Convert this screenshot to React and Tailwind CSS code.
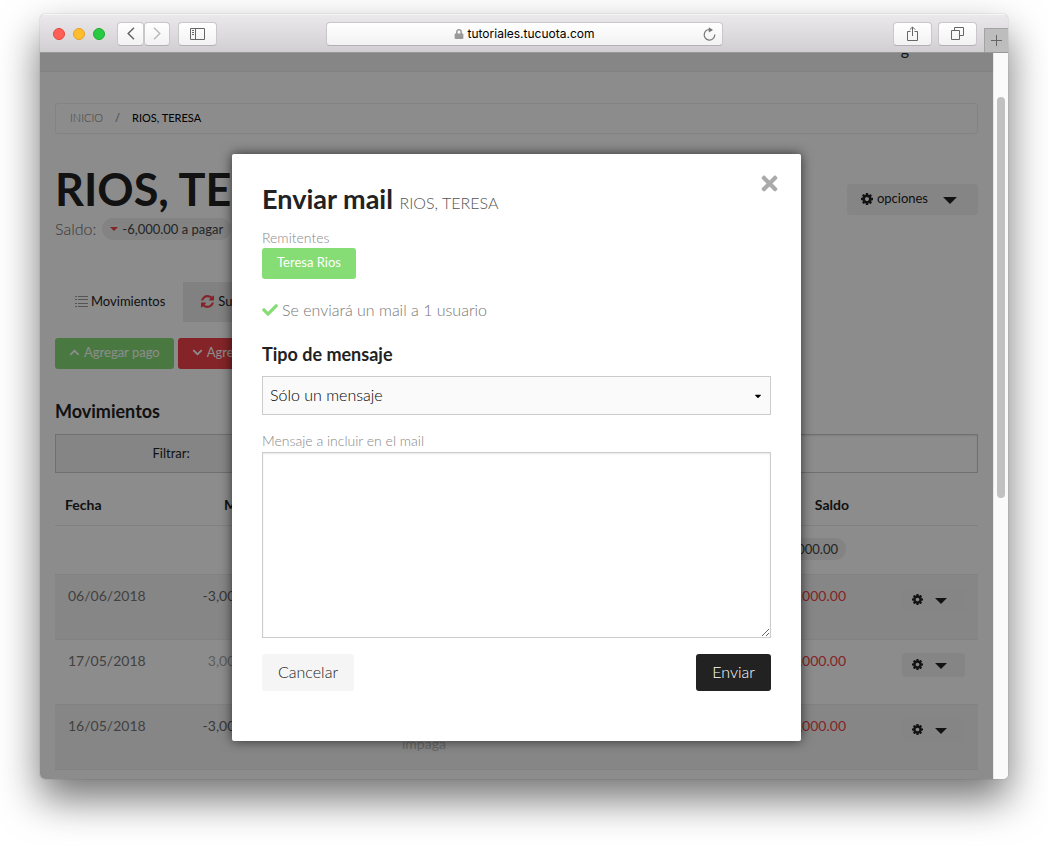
import { FaCaretDown, FaCheck, FaChevronDown, FaChevronUp, FaLock, FaTimes } from 'react-icons/fa';

const movements = [
  { date: '06/06/2018', amount: '-3,000.00', balance: '-6,000.00' },
  { date: '17/05/2018', amount: '3,000.00', balance: '-3,000.00', paid: true },
  { date: '16/05/2018', amount: '-3,000.00', balance: '-6,000.00', status: 'impaga' },
];

function CogIcon({ className }) {
  return (
    <svg viewBox="128 128 1536 1536" fill="currentColor" className={className} aria-hidden="true">
      <path d="M1152 896q0-106-75-181t-181-75-181 75-75 181 75 181 181 75 181-75 75-181zm512-109v222q0 12-8 23t-20 13l-185 28q-19 54-39 91 35 50 107 138 10 12 10 25t-9 23q-27 37-99 108t-94 71q-12 0-26-9l-138-108q-44 23-91 38-16 136-29 186-7 28-36 28h-222q-14 0-24.5-8.5t-11.5-21.5l-28-184q-49-16-90-37l-141 107q-10 9-25 9-14 0-25-11-126-114-165-168-7-10-7-23 0-12 8-23 15-21 51-66.5t54-70.5q-27-50-41-99l-183-27q-13-2-21-12.5t-8-23.5v-222q0-12 8-23t19-13l186-28q14-46 39-92-40-57-107-138-10-12-10-24 0-10 9-23 26-36 98.5-107.5t94.5-71.5q13 0 26 10l138 107q44-23 91-38 16-136 29-186 7-28 36-28h222q14 0 24.5 8.5t11.5 21.5l28 184q49 16 90 37l142-107q9-9 24-9 13 0 25 10 129 119 165 170 7 8 7 22 0 12-8 23-15 21-51 66.5t-54 70.5q26 50 41 98l183 28q13 2 21 12.5t8 23.5z" />
    </svg>
  );
}

function RefreshIcon({ className }) {
  return (
    <svg viewBox="128 128 1536 1536" fill="currentColor" className={className} aria-hidden="true">
      <path d="M1639 1056q0 5-1 7-64 268-268 434.5t-478 166.5q-146 0-282.5-55t-243.5-157l-129 129q-19 19-45 19t-45-19-19-45v-448q0-26 19-45t45-19h448q26 0 45 19t19 45-19 45l-137 137q71 66 161 102t187 36q134 0 250-65t186-179q11-17 53-117 8-23 30-23h192q13 0 22.5 9.5t9.5 22.5zm25-800v448q0 26-19 45t-45 19h-448q-26 0-45-19t-19-45 19-45l138-138q-148-137-349-137-134 0-250 65t-186 179q-11 17-53 117-8 23-30 23h-199q-13 0-22.5-9.5t-9.5-22.5v-7q65-268 270-434.5t480-166.5q146 0 284 55.5t245 156.5l130-129q19-19 45-19t45 19 19 45z" />
    </svg>
  );
}

function ListIcon({ className }) {
  return (
    <svg viewBox="0 0 13 11" stroke="currentColor" className={className} aria-hidden="true">
      <path d="M0 .5h2M3 .5h10M0 3.5h2M3 3.5h10M0 7.5h2M3 7.5h10M0 10.5h2M3 10.5h10" />
    </svg>
  );
}

function Caret({ className }) {
  return (
    <svg viewBox="0 0 14 7" fill="currentColor" className={className} aria-hidden="true">
      <path d="M0 0h14L7 7z" />
    </svg>
  );
}

function ChromeButton({ label, className, children }) {
  return (
    <button
      type="button"
      aria-label={label}
      className={`flex h-6 items-center justify-center rounded border border-[#c9c7c9] border-b-[#b3b1b3] bg-gradient-to-b from-white to-[#f3f2f3] text-[#666] ${className}`}
    >
      {children}
    </button>
  );
}

function BrowserBar() {
  return (
    <header className="grid h-[39px] shrink-0 grid-cols-[1fr_397px_1fr] items-center border-b border-[#979797] bg-gradient-to-b from-[#ebe9eb] to-[#d1cfd1] pt-px shadow-[inset_0_1px_0_#f6f5f6]">
      <div className="flex items-center pl-[13px]">
        <div className="flex gap-2">
          <span className="size-3 rounded-full border border-[#e2463f] bg-[#ff5f57]" />
          <span className="size-3 rounded-full border border-[#e1a325] bg-[#ffbd2e]" />
          <span className="size-3 rounded-full border border-[#1fab2f] bg-[#28ca41]" />
        </div>
        <div className="ml-3 flex">
          <ChromeButton label="Atrás" className="w-[27px]">
            <svg viewBox="0 0 8 13" fill="none" stroke="currentColor" strokeWidth="1.5" className="h-[13px] w-2">
              <path d="M7 .8 1.2 6.5 7 12.2" />
            </svg>
          </ChromeButton>
          <ChromeButton label="Adelante" className="w-[26px]">
            <svg viewBox="0 0 8 13" fill="none" stroke="#bbb" strokeWidth="1.5" className="h-[13px] w-2">
              <path d="M1 .8 6.8 6.5 1 12.2" />
            </svg>
          </ChromeButton>
        </div>
        <ChromeButton label="Barra lateral" className="ml-2 w-[39px]">
          <svg viewBox="0 0 15 12" fill="none" stroke="currentColor" className="h-3 w-[15px]">
            <path d="M.5.5h14v11H.5zM5.5.5v11M2 2.5h2M2 4.5h2M2 6.5h2" />
          </svg>
        </ChromeButton>
      </div>
      <div className="flex h-6 items-center rounded border border-[#c9c7c9] border-b-[#b3b1b3] bg-gradient-to-b from-white to-[#f3f2f3] px-1">
        <span className="w-4" />
        <div className="flex flex-1 items-center justify-center gap-1 font-[Inter,sans-serif] text-[12px] text-black">
          <FaLock size={10} className="text-[#999]" />
          tutoriales.tucuota.com
        </div>
        <button type="button" aria-label="Recargar" className="flex w-4 justify-center text-[#777]">
          <svg viewBox="0 0 13 14" fill="none" stroke="currentColor" strokeWidth="1.2" className="h-[14px] w-[13px]">
            <path d="M8.5 2.9A5.3 5.3 0 1 0 11.8 7.6" />
            <path d="M5.8.2 10 2.9 5.8 5.4z" fill="currentColor" stroke="none" />
          </svg>
        </button>
      </div>
      <div className="flex items-center justify-end self-stretch">
        <ChromeButton label="Compartir" className="w-[39px]">
          <svg viewBox="0 0 13 15" fill="none" stroke="currentColor" className="h-[15px] w-[13px]">
            <path d="M4.5 5.5h-3v9h10v-9h-3M6.5 10V1M3.8 3.7 6.5 1l2.7 2.7" />
          </svg>
        </ChromeButton>
        <ChromeButton label="Mostrar pestañas" className="ml-1.5 w-[39px]">
          <svg viewBox="0 0 13 13" fill="none" stroke="currentColor" className="size-[13px]">
            <path d="M.5 3.5h8v9h-8zM3.5 3.5v-3h9v8h-4" />
          </svg>
        </ChromeButton>
        <button
          type="button"
          aria-label="Nueva pestaña"
          className="ml-[7px] flex h-6 w-6 items-center justify-center self-end border-t border-l border-[#a3a3a3] bg-[#bebdbe] text-[#666]"
        >
          <svg viewBox="0 0 11 11" stroke="currentColor" className="size-[11px]">
            <path d="M5.5 0v11M0 5.5h11" />
          </svg>
        </button>
      </div>
    </header>
  );
}

function AccountPage() {
  return (
    <div className="text-[#222]">
      <nav className="flex h-[19px] items-start justify-end border-b border-[#ebebeb] bg-[#f4f4f4] pr-[84px] text-base leading-none">
        <a href="#cuenta" className="-mt-3">g</a>
      </nav>

      <div className="px-[15px]">
        <ol className="mt-[31px] flex h-[31px] items-center rounded-[3px] border border-[#eee] px-[14px] text-[11px] uppercase">
          <li><a href="#inicio" className="font-light text-[#777]">Inicio</a></li>
          <li className="mx-3 text-[#777]">/</li>
          <li className="text-black">Rios, Teresa</li>
        </ol>

        <div className="mt-[29px] flex items-start justify-between">
          <div>
            <h1 className="text-[45px] leading-[52px] font-bold">RIOS, TERESA</h1>
            <p className="mt-[3px] flex items-center text-base leading-[22px] font-light text-[#666]">
              Saldo:
              <span className="ml-[6px] flex items-center rounded-full bg-[#eee] px-2 text-[13px] leading-[22px] font-normal text-[#444]">
                <Caret className="mr-1 h-1 w-2 text-[#f04249]" />
                -6,000.00 a pagar
              </span>
            </p>
          </div>
          <button type="button" className="mt-[21px] flex h-[31px] items-center rounded-[3px] bg-[#f3f3f3] pr-[21px] pb-0.5 pl-[14px] text-[13px]">
            <CogIcon className="mr-1 size-3" />
            opciones
            <Caret className="mt-1 ml-[15px] h-[7px] w-[14px]" />
          </button>
        </div>

        <div className="mt-[42px] flex text-[13px] leading-[39px]">
          <a href="#movimientos" className="flex items-center pr-[18px] pb-px pl-5">
            <ListIcon className="mr-[3px] h-[11px] w-[13px] text-[#999]" />
            Movimientos
          </a>
          <a href="#suscripciones" className="flex items-center bg-[#ebebeb] pr-5 pb-px pl-[18px]">
            <RefreshIcon className="mr-1 size-[13px] text-[#f04249]" />
            Suscripciones
          </a>
        </div>

        <div className="mt-4 flex gap-1 text-[13px] text-white">
          <button type="button" className="flex h-[31px] items-center gap-1 rounded-[3px] bg-[#86dc75] px-[14px] pb-0.5">
            <FaChevronUp size={11} /> Agregar pago
          </button>
          <button type="button" className="flex h-[31px] items-center gap-1 rounded-[3px] bg-[#f04249] px-[14px] pb-0.5">
            <FaChevronDown size={11} /> Agregar deuda
          </button>
        </div>

        <h2 className="mt-[30px] text-lg leading-6 font-bold">Movimientos</h2>
        <div className="mt-[11px] flex h-[39px] border border-[#ccc]">
          <label htmlFor="filter" className="flex w-1/4 items-center justify-center bg-[#f2f2f2] pt-px text-[13px]">
            Filtrar:
          </label>
          <input id="filter" type="text" className="min-w-0 flex-1 border-l border-[#ccc] px-2 shadow-[inset_0_1px_2px_rgba(0,0,0,0.1)]" />
        </div>

        <table className="mt-3 w-full table-fixed border-collapse text-sm">
          <colgroup>
            <col className="w-[120px]" />
            <col className="w-[101px]" />
            <col className="w-[113px]" />
            <col />
            <col className="w-[120px]" />
            <col className="w-[119px]" />
          </colgroup>
          <thead>
            <tr className="h-10 border-b border-[#ebebeb]">
              <th className="px-[10px] text-left">Fecha</th>
              <th className="px-[10px] text-right">Monto</th>
              <th />
              <th />
              <th className="px-[10px] text-right">Saldo</th>
              <th />
            </tr>
          </thead>
          <tbody className="align-top">
            <tr className="h-[49px] border-b border-[#ebebeb]">
              <td colSpan={4} />
              <td className="px-[13px] pt-3 text-right">
                <span className="inline-block rounded-full bg-[#eee] px-2 text-[13px] leading-[22px] text-[#444]">-6,000.00</span>
              </td>
              <td />
            </tr>
            {movements.map((m) => (
              <tr key={m.date} className="h-[65px] border-b border-[#ebebeb] leading-[18px] odd:bg-white even:bg-[#f5f5f5]">
                <td className="px-[13px] pt-3 text-[#777]">{m.date}</td>
                <td className={m.paid ? 'px-[13px] pt-3 text-right text-[#aaa]' : 'px-[13px] pt-3 text-right text-[#666]'}>
                  {m.amount}
                </td>
                <td />
                <td className="px-[13px] pt-[30px] text-[#bbb]">{m.status}</td>
                <td className="px-[13px] pt-3 text-right text-[#f04249]">{m.balance}</td>
                <td className="pt-[13px] pr-[13px]">
                  <button type="button" aria-label="Opciones" className="ml-auto flex h-6 w-[63px] items-center rounded-[3px] bg-[#f3f3f3] pb-px pl-[10px]">
                    <CogIcon className="size-[11px]" />
                    <Caret className="mt-[3px] ml-3 h-[6px] w-3" />
                  </button>
                </td>
              </tr>
            ))}
          </tbody>
        </table>
      </div>
    </div>
  );
}

function SendMailModal() {
  return (
    <div className="absolute inset-0 flex items-start justify-center bg-black/45 pt-[101px]">
      <form
        role="dialog"
        aria-labelledby="modal-title"
        className="relative w-full max-w-[569px] rounded-[2px] bg-white px-[30px] pt-[29px] pb-[50px] text-[#222] shadow-[0_0_12px_rgba(0,0,0,0.65)]"
      >
        <button type="button" aria-label="Cerrar" className="absolute top-[18px] right-5 text-[#aaa]">
          <FaTimes size={23} />
        </button>

        <h2 id="modal-title" className="text-[27px] leading-8 font-bold">
          Enviar mail <small className="text-base font-light text-[#555]">RIOS, TERESA</small>
        </h2>

        <p className="mt-3 text-sm leading-[21px] font-light text-[#888]">Remitentes</p>
        <button type="button" className="block h-[31px] rounded-[3px] bg-[#86dc75] px-[15px] pb-0.5 text-[13px] text-white">
          Teresa Rios
        </button>

        <p className="mt-[19px] flex items-center gap-1 text-base leading-6 font-light text-[#777]">
          <FaCheck size={16} className="text-[#86dc75]" /> Se enviará un mail a 1 usuario
        </p>

        <label htmlFor="type" className="mt-5 block text-lg leading-6 font-bold">Tipo de mensaje</label>
        <div className="relative mt-[10px]">
          <select id="type" className="h-[39px] w-full appearance-none border border-[#ccc] bg-[#fafafa] px-[7px] pb-0.5 text-base font-light text-black">
            <option>Sólo un mensaje</option>
          </select>
          <FaCaretDown size={10} className="pointer-events-none absolute top-[15px] right-2 text-black" />
        </div>

        <label htmlFor="message" className="mt-[15px] block text-sm leading-[22px] font-light text-[#888]">
          Mensaje a incluir en el mail
        </label>
        <textarea
          id="message"
          className="block h-[186px] w-full border border-[#ccc] bg-white p-2 shadow-[inset_0_1px_2px_rgba(0,0,0,0.1)]"
        />

        <div className="mt-4 flex justify-between text-base font-light">
          <button type="button" className="h-[37px] rounded-[3px] bg-[#f5f5f5] px-4 pb-0.5 text-[#222]">Cancelar</button>
          <button type="submit" className="h-[37px] rounded-[3px] bg-[#222] px-4 pb-0.5 text-white">Enviar</button>
        </div>
      </form>
    </div>
  );
}

export default function App() {
  return (
    <div className="flex h-screen flex-col overflow-hidden bg-white px-10 pt-[14px] pb-[67px] font-[Lato,sans-serif]">
      <div className="flex min-h-0 flex-1 flex-col overflow-hidden rounded-[5px] shadow-[0_0_1px_rgba(0,0,0,0.5),0_20px_40px_rgba(0,0,0,0.55)]">
        <BrowserBar />
        <div className="flex min-h-0 flex-1 bg-white">
          <main className="relative min-w-0 flex-1 overflow-hidden">
            <AccountPage />
            <SendMailModal />
          </main>
          <div className="w-[15px] border-l border-[#e8e8e8] bg-[#fafafa] px-[3px] pt-11">
            <div className="h-[401px] rounded-full bg-[#c1c1c1]" />
          </div>
        </div>
      </div>
    </div>
  );
}
